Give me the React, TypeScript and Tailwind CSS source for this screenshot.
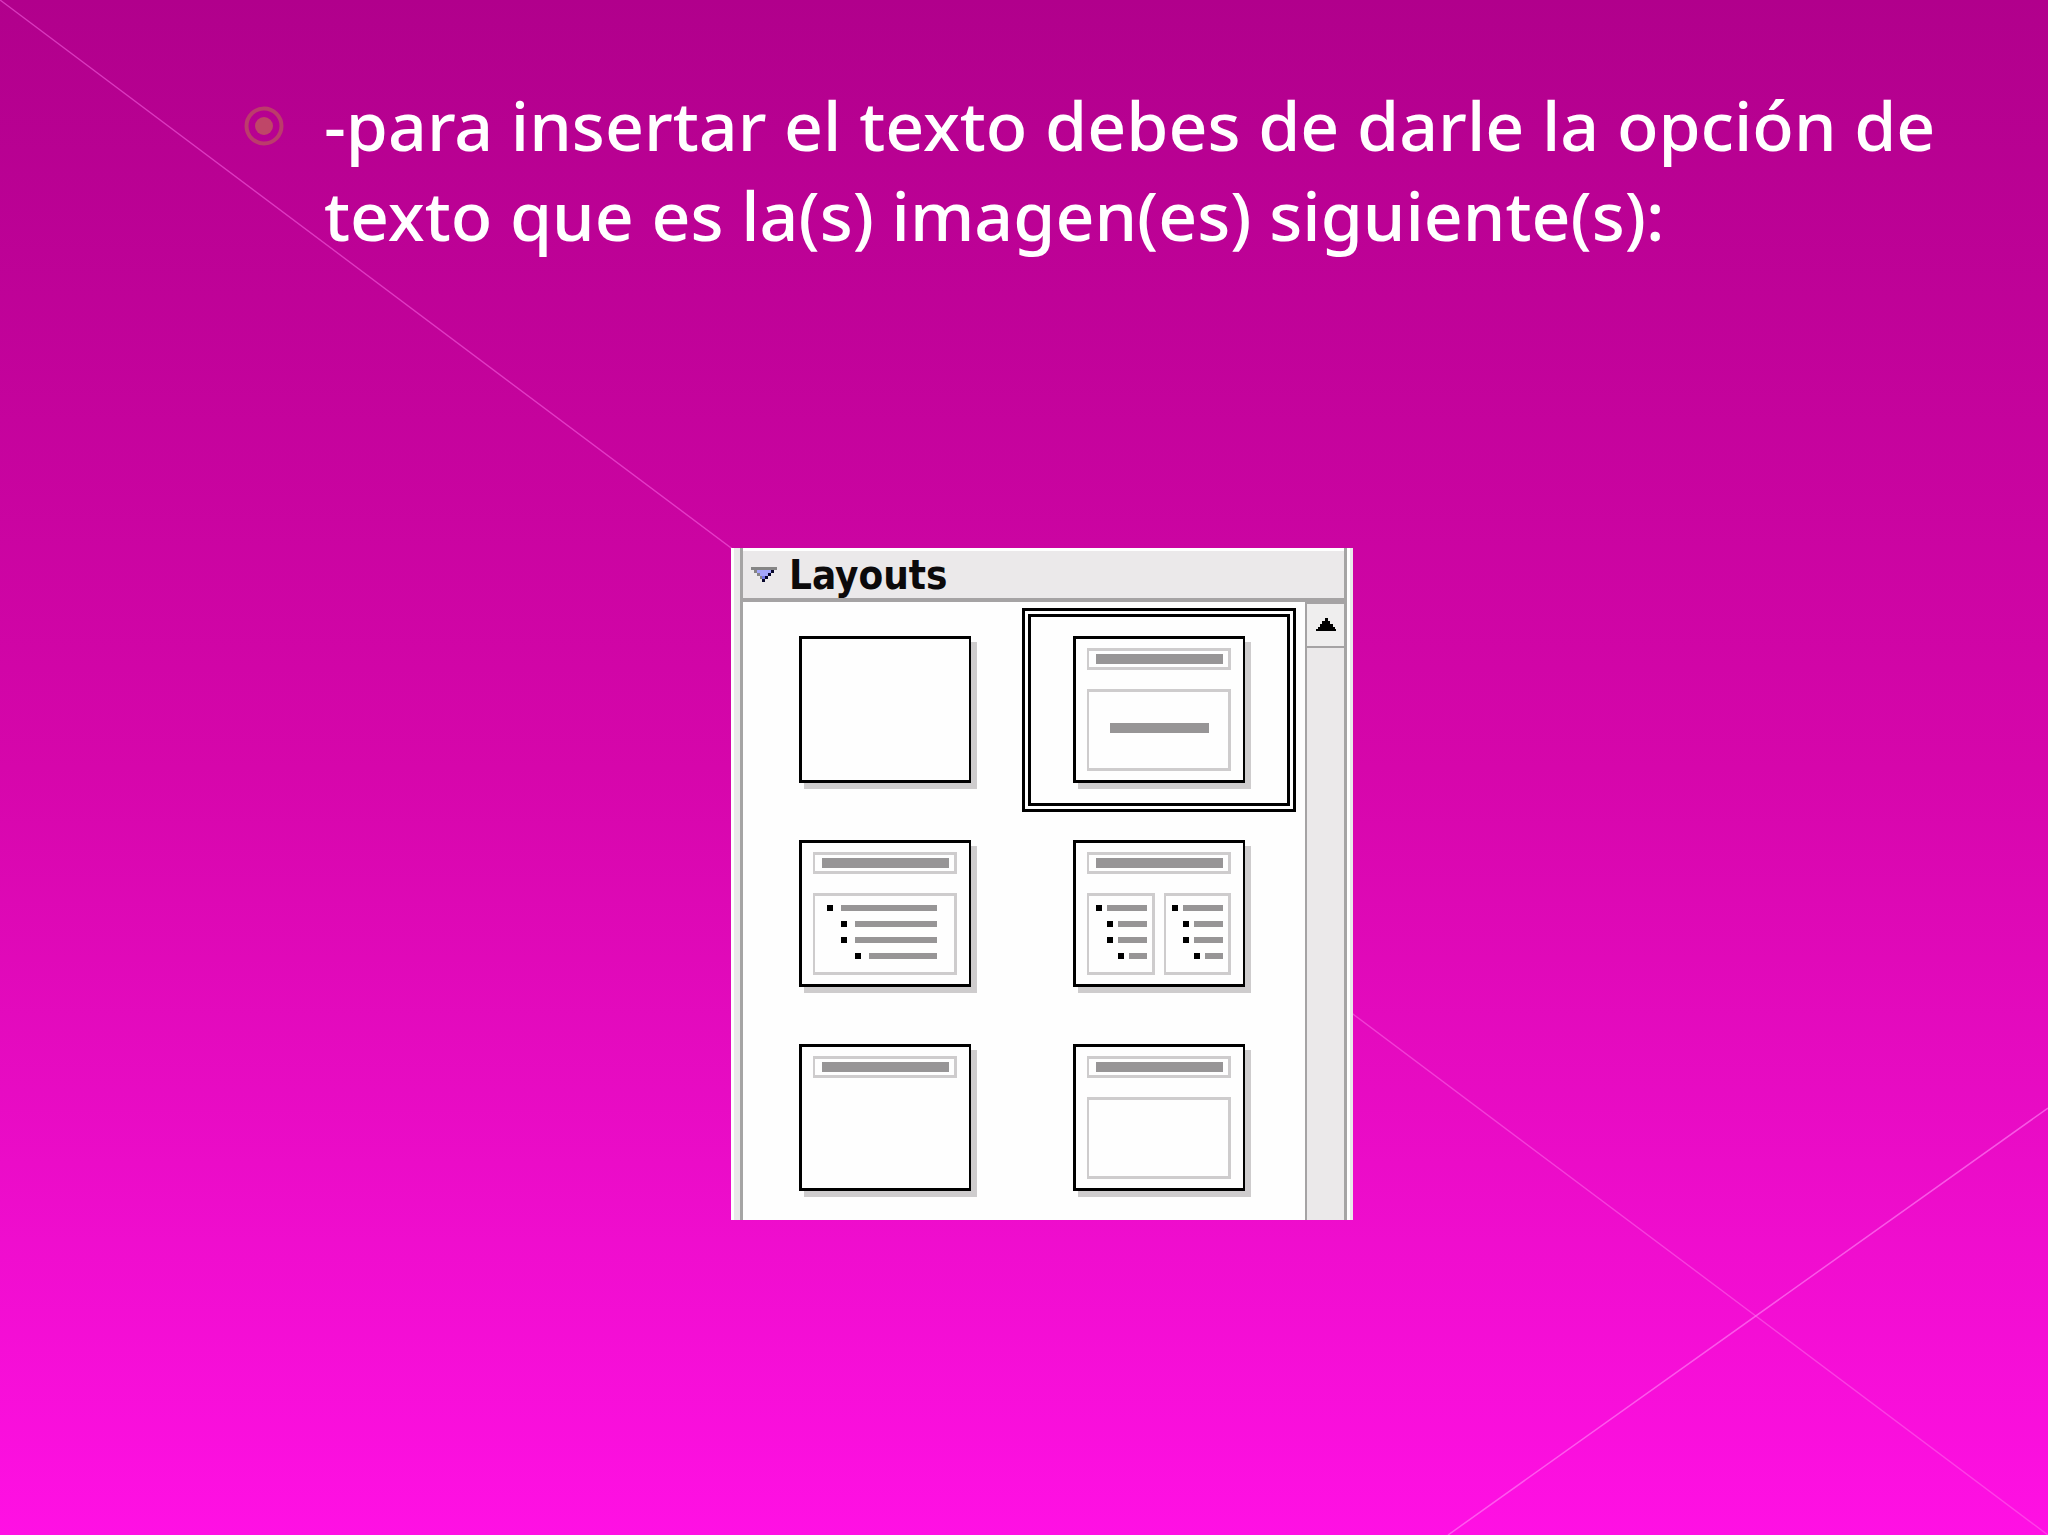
import React from "react";

type Kind = "blank" | "centered" | "list" | "two" | "title" | "content";

const layouts: { kind: Kind; label: string }[] = [
  { kind: "blank", label: "Blank" },
  { kind: "centered", label: "Title, centered text" },
  { kind: "list", label: "Title, list" },
  { kind: "two", label: "Title, two lists" },
  { kind: "title", label: "Title only" },
  { kind: "content", label: "Title, content" },
];

function Frame({ x, y, w, h }: { x: number; y: number; w: number; h: number }) {
  return (
    <>
      <rect x={x} y={y} width={w} height={h} fill="#cecccd" />
      <rect x={x + 2} y={y + 3} width={w - 5} height={h - 6} fill="#fefefe" />
    </>
  );
}

function Rows({ x, step, end }: { x: number; step: number; end: number }) {
  return (
    <>
      {[0, 1, 1, 2].map((level, i) => {
        const left = x + level * step;
        return (
          <g key={i}>
            <rect x={left} y={65 + i * 16} width="6" height="6" fill="#000" />
            <rect x={left + step} y={65 + i * 16} width={end - left - step} height="6" fill="#979596" />
          </g>
        );
      })}
    </>
  );
}

function Thumb({ kind }: { kind: Kind }) {
  return (
    <svg viewBox="0 0 178 153" className="block h-[153px] w-[178px]" shapeRendering="crispEdges" aria-hidden="true">
      <rect x="5" y="6" width="173" height="147" fill="#cecccd" />
      <rect width="172" height="147" fill="#000" />
      <rect x="3" y="3" width="167" height="141" fill="#fefefe" />
      {kind !== "blank" && (
        <>
          <Frame x={14} y={12} w={144} h={22} />
          <rect x="23" y="18" width="127" height="10" fill="#979596" />
        </>
      )}
      {(kind === "centered" || kind === "list" || kind === "content") && <Frame x={14} y={53} w={144} h={82} />}
      {kind === "centered" && <rect x="37" y="87" width="99" height="10" fill="#979596" />}
      {kind === "list" && <Rows x={28} step={14} end={138} />}
      {kind === "two" && (
        <>
          <Frame x={14} y={53} w={68} h={82} />
          <Frame x={91} y={53} w={67} h={82} />
          <Rows x={23} step={11} end={74} />
          <Rows x={99} step={11} end={150} />
        </>
      )}
    </svg>
  );
}

export default function App() {
  return (
    <main className="relative isolate min-h-screen overflow-hidden bg-linear-to-b from-[#b1008c] via-[#d606ab] to-[#ff10e4] pt-20">
      <svg
        className="absolute inset-0 -z-10 h-full w-full"
        viewBox="0 0 2048 1535"
        preserveAspectRatio="none"
        fill="none"
        aria-hidden="true"
      >
        <path d="M0 0 2048 1535" stroke="#ff70ee" strokeOpacity=".5" strokeWidth="1.4" />
        <path d="M1448 1535 2048 1108" stroke="#ff80f4" strokeOpacity=".65" strokeWidth="1.5" />
      </svg>

      <ul className="pr-16 pl-[244px]">
        <li className="flex items-start gap-10">
          <svg viewBox="0 0 40 40" className="mt-[26px] h-10 w-10 shrink-0" fill="none" aria-hidden="true">
            <circle cx="20" cy="20" r="17.5" stroke="#bc3b6c" strokeWidth="4" />
            <circle cx="20" cy="20" r="9" fill="#bf4668" />
          </svg>
          <p className="font-['Noto_Sans',sans-serif] text-[68px] leading-[90px] font-medium text-white">
            -para insertar el texto debes de darle la opción de
            <br />
            texto que es la(s) imagen(es) siguiente(s):
          </p>
        </li>
      </ul>

      <section
        aria-label="Layouts"
        className="mt-72 ml-[731px] flex w-[622px] border-l-[3px] border-white bg-[#e9e9e9]"
      >
        <div className="ml-[6px] flex-1 border-x-[3px] border-[#a5a4a4]">
          <header className="border-t-[3px] border-b-4 border-t-white border-b-[#a5a3a4] bg-[#ebe9ea]">
            <button type="button" className="flex h-[47px] w-full items-center gap-3 pl-2 text-left">
              <svg viewBox="0 0 26 16" className="h-4 w-[26px]" aria-hidden="true" shapeRendering="crispEdges">
                <path d="M3 3h20v3h-3v3h-3v3h-3v3h-3v-3H9V9H6V6H3z" fill="#a3a6fb" />
                <path d="M9 9h8v3h-3v3h-3v-3H9z" fill="#7376e6" />
                <path d="M0 0h26v3H0zM3 3h3v3H3zM6 6h3v3H6zM9 9h2v3H9z" fill="#858585" />
                <path d="M20 3h3v3h-3zM17 6h3v3h-3zM14 9h3v3h-3zM11 12h3v3h-3z" fill="#08082c" />
              </svg>
              <span className="font-['DejaVu_Sans_Condensed','DejaVu_Sans',sans-serif] text-[40px] leading-[48px] font-bold text-[#0c0a0b]">
                Layouts
              </span>
            </button>
          </header>
          <div className="flex bg-[#fefefe]">
            <div className="grid flex-1 grid-cols-[274px_274px] pt-[6px] pl-[5px]">
              {layouts.map(({ kind, label }) => (
                <button
                  key={kind}
                  type="button"
                  aria-label={label}
                  aria-pressed={kind === "centered"}
                  className="flex h-[204px] items-start border-[9px] border-double border-transparent pt-[19px] pl-[42px] aria-pressed:border-black"
                >
                  <Thumb kind={kind} />
                </button>
              ))}
            </div>
            <div className="w-[39px] border-l-2 border-[#a5a3a4] bg-[#ebe9ea]">
              <button
                type="button"
                aria-label="Scroll up"
                className="flex h-[46px] w-full items-center justify-center border-t-2 border-b-2 border-[#a5a3a4] bg-[#efeeee]"
              >
                <svg viewBox="0 0 20 14" className="h-[14px] w-5" aria-hidden="true" shapeRendering="crispEdges">
                  <path d="M9 0h3v3h2v3h3v3h2v2h1v2H0v-2h2V9h2V6h2V3h3z" fill="#000" />
                </svg>
              </button>
            </div>
          </div>
        </div>
        <div className="w-[6px] border-l-[3px] border-white" />
      </section>
    </main>
  );
}
